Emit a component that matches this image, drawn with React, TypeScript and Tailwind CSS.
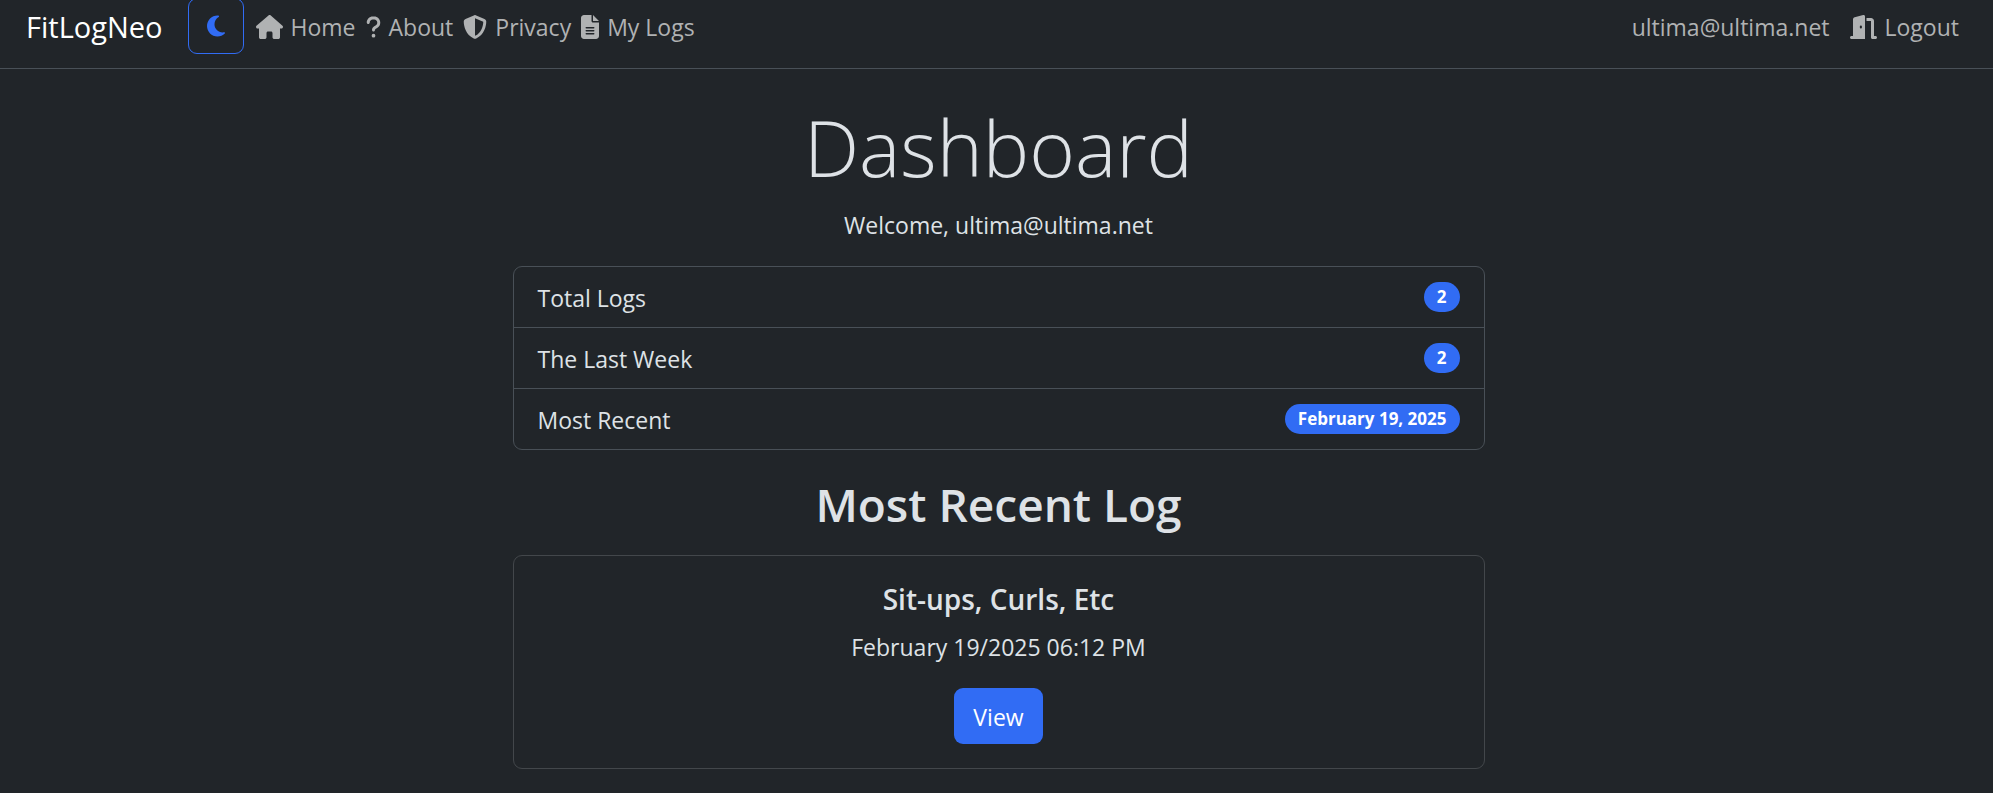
import { FaHouse, FaQuestion, FaShieldHalved, FaFileLines, FaMoon, FaDoorOpen } from "react-icons/fa6";

const navLinks = [
  { label: "Home", Icon: FaHouse, size: "h-6 w-[27px]" },
  { label: "About", Icon: FaQuestion, size: "h-6 w-[15px]" },
  { label: "Privacy", Icon: FaShieldHalved, size: "h-6 w-6" },
  { label: "My Logs", Icon: FaFileLines, size: "h-6 w-[18px]" },
];

const stats = [
  { label: "Total Logs", value: "2" },
  { label: "The Last Week", value: "2" },
  { label: "Most Recent", value: "February 19, 2025" },
];

export default function App() {
  return (
    <div className="min-h-screen bg-[#212529] font-['Open_Sans','Noto_Sans',sans-serif] text-[23px] leading-9 text-[#dee2e6]">
      <nav className="flex h-[69px] items-start justify-between border-b border-[#495057] pr-[34px] pl-[26px]">
        <div className="flex items-start">
          <a href="#" className="mr-[25px] pt-[9px] text-[29px] text-white">FitLogNeo</a>
          <button
            type="button"
            aria-label="Toggle theme"
            className="-mt-0.5 mr-3 flex h-14 w-14 items-center justify-center rounded-[9px] border border-[#316cf4] text-2xl text-[#316cf4]"
          >
            <FaMoon />
          </button>
          <ul className="flex gap-2.5 pt-[9px] text-[#b0b2b3]">
            {navLinks.map(({ label, Icon, size }) => (
              <li key={label}>
                <a href="#" className="flex items-center gap-2">
                  <Icon className={size} />
                  {label}
                </a>
              </li>
            ))}
          </ul>
        </div>
        <div className="flex gap-5 pt-[9px] text-[#b0b2b3]">
          <a href="#">ultima@ultima.net</a>
          <a href="#" className="flex items-center gap-2">
            <FaDoorOpen className="h-6 w-[27px]" />
            Logout
          </a>
        </div>
      </nav>

      <div className="pl-1">
        <main className="mx-auto max-w-[972px] pt-7 text-center">
          <h1 className="text-[78px] leading-[100px] font-light">Dashboard</h1>
          <p className="mt-2.5 mb-[23px]">Welcome, ultima@ultima.net</p>
          <ul className="divide-y divide-[#495057] rounded-[9px] border border-[#495057]">
            {stats.map(({ label, value }) => (
              <li key={label} className="flex items-start justify-between px-6 pt-[13px] pb-[11px]">
                {label}
                <span className="mt-0.5 rounded-full bg-[#316cf4] px-[13px] text-[17px] leading-[30px] font-bold text-white">
                  {value}
                </span>
              </li>
            ))}
          </ul>
          <h2 className="mt-[25px] mb-[22px] text-[46px] leading-[58px] font-semibold">Most Recent Log</h2>
          <section className="rounded-[9px] border border-[#43474b] px-6 pt-[25px] pb-6">
            <h3 className="mb-3 text-[28px] leading-9 font-semibold">Sit-ups, Curls, Etc</h3>
            <p className="mb-[23px]">February 19/2025 06:12 PM</p>
            <a href="#" className="inline-block rounded-[9px] bg-[#316cf4] px-[19px] pt-[11px] pb-[9px] text-white">View</a>
          </section>
        </main>
      </div>
    </div>
  );
}
